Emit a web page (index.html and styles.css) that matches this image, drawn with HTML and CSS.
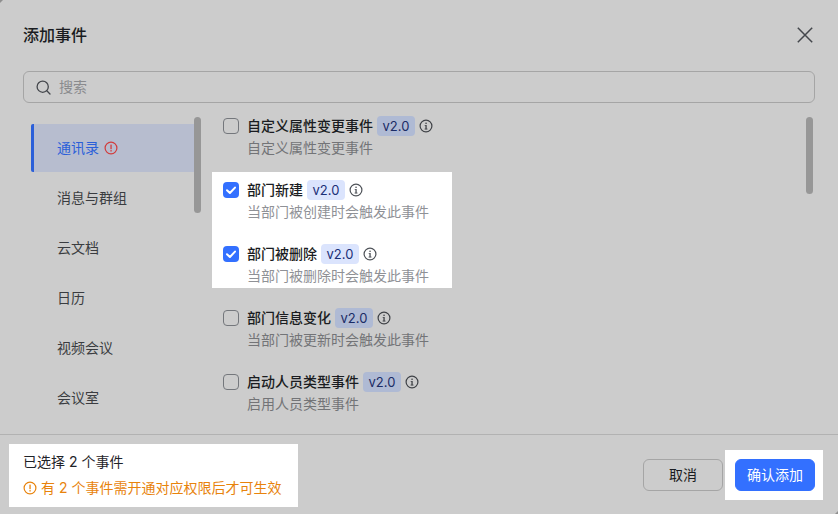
FILE: index.html
```html
<!DOCTYPE html>
<html lang="zh-CN">
<head>
<meta charset="utf-8">
<title>添加事件</title>
<link rel="stylesheet" href="styles.css">
</head>
<body>
<svg class="sprite" width="0" height="0" aria-hidden="true">
  <symbol id="info" viewBox="0 0 14 14"><circle cx="7" cy="7" r="5.9" fill="none" stroke="currentColor" stroke-width="1.2"/><rect x="6.4" y="6" width="1.3" height="4.2" fill="currentColor"/><rect x="5.6" y="9.6" width="2.9" height="0.9" fill="currentColor"/><rect x="5.7" y="6" width="1.2" height="0.8" fill="currentColor"/><rect x="6.4" y="3.6" width="1.3" height="1.4" fill="currentColor"/></symbol>
  <symbol id="warn" viewBox="0 0 14 14"><circle cx="7" cy="7" r="5.9" fill="none" stroke="currentColor" stroke-width="1.2"/><rect x="6.4" y="3.6" width="1.3" height="4.6" fill="currentColor"/><rect x="6.4" y="9.1" width="1.3" height="1.4" fill="currentColor"/></symbol>
  <symbol id="check" viewBox="0 0 16 16"><path d="M4 8.2 6.9 11 12 5.6" fill="none" stroke="#fff" stroke-width="2" stroke-linecap="round" stroke-linejoin="round"/></symbol>
</svg>
<main class="dialog">
  <header class="head">
    <h1 class="title">添加事件</h1>
    <svg class="close" width="16" height="16" viewBox="0 0 16 16"><path d="M.8.8l14.4 14.4M15.2.8.8 15.2" fill="none" stroke="currentColor" stroke-width="1.5"/></svg>
  </header>
  <div class="search">
    <svg class="search-icon" width="15" height="15" viewBox="0 0 15 15"><circle cx="6.7" cy="6.7" r="5.6" fill="none" stroke="currentColor" stroke-width="1.3"/><path d="M10.8 10.8l3.2 3.2" fill="none" stroke="currentColor" stroke-width="1.3" stroke-linecap="round"/></svg>
    <span class="placeholder">搜索</span>
  </div>
  <section class="body">
    <nav class="side">
      <div class="side-item active">通讯录<svg class="side-warn" width="14" height="14"><use href="#warn"/></svg></div>
      <div class="side-item">消息与群组</div>
      <div class="side-item">云文档</div>
      <div class="side-item">日历</div>
      <div class="side-item">视频会议</div>
      <div class="side-item">会议室</div>
      <span class="thumb thumb-side"></span>
    </nav>
    <div class="list">
      <div class="row">
        <span class="box"></span>
        <div><div class="row-title"><b class="name">自定义属性变更事件</b><span class="tag">v2.0</span><svg class="info" width="14" height="14"><use href="#info"/></svg></div><div class="desc">自定义属性变更事件</div></div>
      </div>
      <div class="picked">
        <div class="row">
          <span class="box on"><svg width="16" height="16"><use href="#check"/></svg></span>
          <div><div class="row-title"><b class="name">部门新建</b><span class="tag">v2.0</span><svg class="info" width="14" height="14"><use href="#info"/></svg></div><div class="desc">当部门被创建时会触发此事件</div></div>
        </div>
        <div class="row">
          <span class="box on"><svg width="16" height="16"><use href="#check"/></svg></span>
          <div><div class="row-title"><b class="name">部门被删除</b><span class="tag">v2.0</span><svg class="info" width="14" height="14"><use href="#info"/></svg></div><div class="desc">当部门被删除时会触发此事件</div></div>
        </div>
      </div>
      <div class="row">
        <span class="box"></span>
        <div><div class="row-title"><b class="name">部门信息变化</b><span class="tag">v2.0</span><svg class="info" width="14" height="14"><use href="#info"/></svg></div><div class="desc">当部门被更新时会触发此事件</div></div>
      </div>
      <div class="row">
        <span class="box"></span>
        <div><div class="row-title"><b class="name">启动人员类型事件</b><span class="tag">v2.0</span><svg class="info" width="14" height="14"><use href="#info"/></svg></div><div class="desc">启用人员类型事件</div></div>
      </div>
      <span class="thumb thumb-list"></span>
    </div>
  </section>
  <footer class="foot">
    <div class="summary">
      <div class="count">已选择 2 个事件</div>
      <div class="notice"><svg width="14" height="14"><use href="#warn"/></svg>有 2 个事件需开通对应权限后才可生效</div>
    </div>
    <div class="actions">
      <button class="btn" type="button">取消</button>
      <div class="primary-wrap"><button class="btn primary" type="button">确认添加</button></div>
    </div>
  </footer>
</main>
</body>
</html>
```

FILE: styles.css
```css
* { box-sizing: border-box; }
html, body { margin: 0; height: 100%; }
body {
  background: #cccccc;
  color: #1a1c21;
  font-family: Inter, "Noto Sans CJK SC", "Noto Sans", sans-serif;
  font-size: 14px;
  line-height: 22px;
  overflow: hidden;
}
.sprite { position: absolute; }
.dialog {
  height: 514px;
  display: flex;
  flex-direction: column;
  position: relative;
}
.dialog::before, .dialog::after {
  content: "";
  position: absolute;
  width: 3px;
  height: 3px;
  background: #8f8f8f;
}
.dialog::before { left: 0; top: 0; clip-path: polygon(0 0, 100% 0, 0 100%); }
.dialog::after { right: 0; bottom: 0; clip-path: polygon(100% 0, 100% 100%, 0 100%); }
.head {
  height: 71px;
  padding: 0 25px 1px 23px;
  display: flex;
  align-items: center;
  justify-content: space-between;
}
.title { margin: 0; font-size: 16px; line-height: 24px; font-weight: 500; }
.close { color: #44474c; }
.search {
  margin: 0 23px;
  height: 32px;
  border: 1px solid #a5a5a5;
  border-radius: 6px;
  display: flex;
  align-items: center;
  padding-left: 12px;
  gap: 8px;
  flex: none;
}
.search-icon { color: #44474c; }
.placeholder { color: #8a8b8e; }
.body {
  flex: 1;
  min-height: 0;
  margin-top: 5px;
  display: flex;
  position: relative;
}
.side {
  width: 212px;
  padding: 16px 18px 0 31px;
  display: flex;
  flex-direction: column;
  gap: 2px;
  flex: none;
}
.side-item {
  height: 48px;
  flex: none;
  padding-left: 26px;
  display: flex;
  align-items: center;
  color: #3a3c40;
}
.side-item.active {
  background: #b7bdcf;
  border-left: 3px solid #2b5fd9;
  border-radius: 2px 0 0 2px;
  padding-left: 23px;
  color: #2b5fd9;
}
.side-warn { color: #d23c3c; margin-left: 5px; }
.list { flex: 1; position: relative; }
.row { display: flex; height: 52px; padding: 7px 0 0 11px; margin-bottom: 12px; gap: 8px; }
.picked { width: 240px; background: #fff; margin-bottom: 12px; }
.picked .row:last-child { margin-bottom: 0; }
.box {
  width: 16px;
  height: 16px;
  margin-top: 3px;
  border: 1px solid #74777c;
  border-radius: 4px;
  flex: none;
}
.box svg { display: block; }
.box.on { background: #3370ff; border: 0; }
.row-title { display: flex; align-items: center; height: 22px; }
.name { font-weight: 500; white-space: nowrap; }
.tag {
  height: 20px;
  width: 38px;
  margin-left: 4px;
  border-radius: 4px;
  background: #afbad4;
  color: #1b2c66;
  font-size: 13px;
  line-height: 20px;
  text-align: center;
}
.picked .tag { background: #dbe4fd; color: #1b2f77; }
.info { margin-left: 4px; color: #3f4247; }
.picked .info { color: #4e5258; }
.desc { color: #737477; white-space: nowrap; }
.picked .desc { color: #8f9196; }
.thumb {
  position: absolute;
  width: 7px;
  border-radius: 4px;
  background: #979797;
}
.thumb-side { left: 194px; top: 9px; height: 96px; }
.thumb-list { right: 25px; top: 9px; height: 77px; }
.foot {
  height: 80px;
  flex: none;
  border-top: 1px solid #b2b2b2;
  display: flex;
  justify-content: space-between;
}
.summary {
  width: 289px;
  height: 63px;
  margin: 9px 0 0 9px;
  padding: 7px 14px 0;
  background: #fff;
}
.count { color: #1f2329; }
.notice { margin-top: 4px; color: #e8830c; display: flex; align-items: center; gap: 4px; white-space: nowrap; }
.actions { display: flex; align-items: flex-start; margin-right: 15px; padding-top: 15px; }
.primary-wrap {
  background: #fff;
  width: 98px;
  height: 50px;
  margin-left: 2px;
  padding: 9px 8px 9px 10px;
}
.btn {
  width: 80px;
  height: 32px;
  font: inherit;
  line-height: 20px;
  padding: 0;
  border-radius: 6px;
  border: 1px solid #a5a5a5;
  background: transparent;
  color: #1a1c21;
}
.actions > .btn { margin-top: 9px; }
.primary { background: #3370ff; border-color: #3370ff; color: #fff; }
```
